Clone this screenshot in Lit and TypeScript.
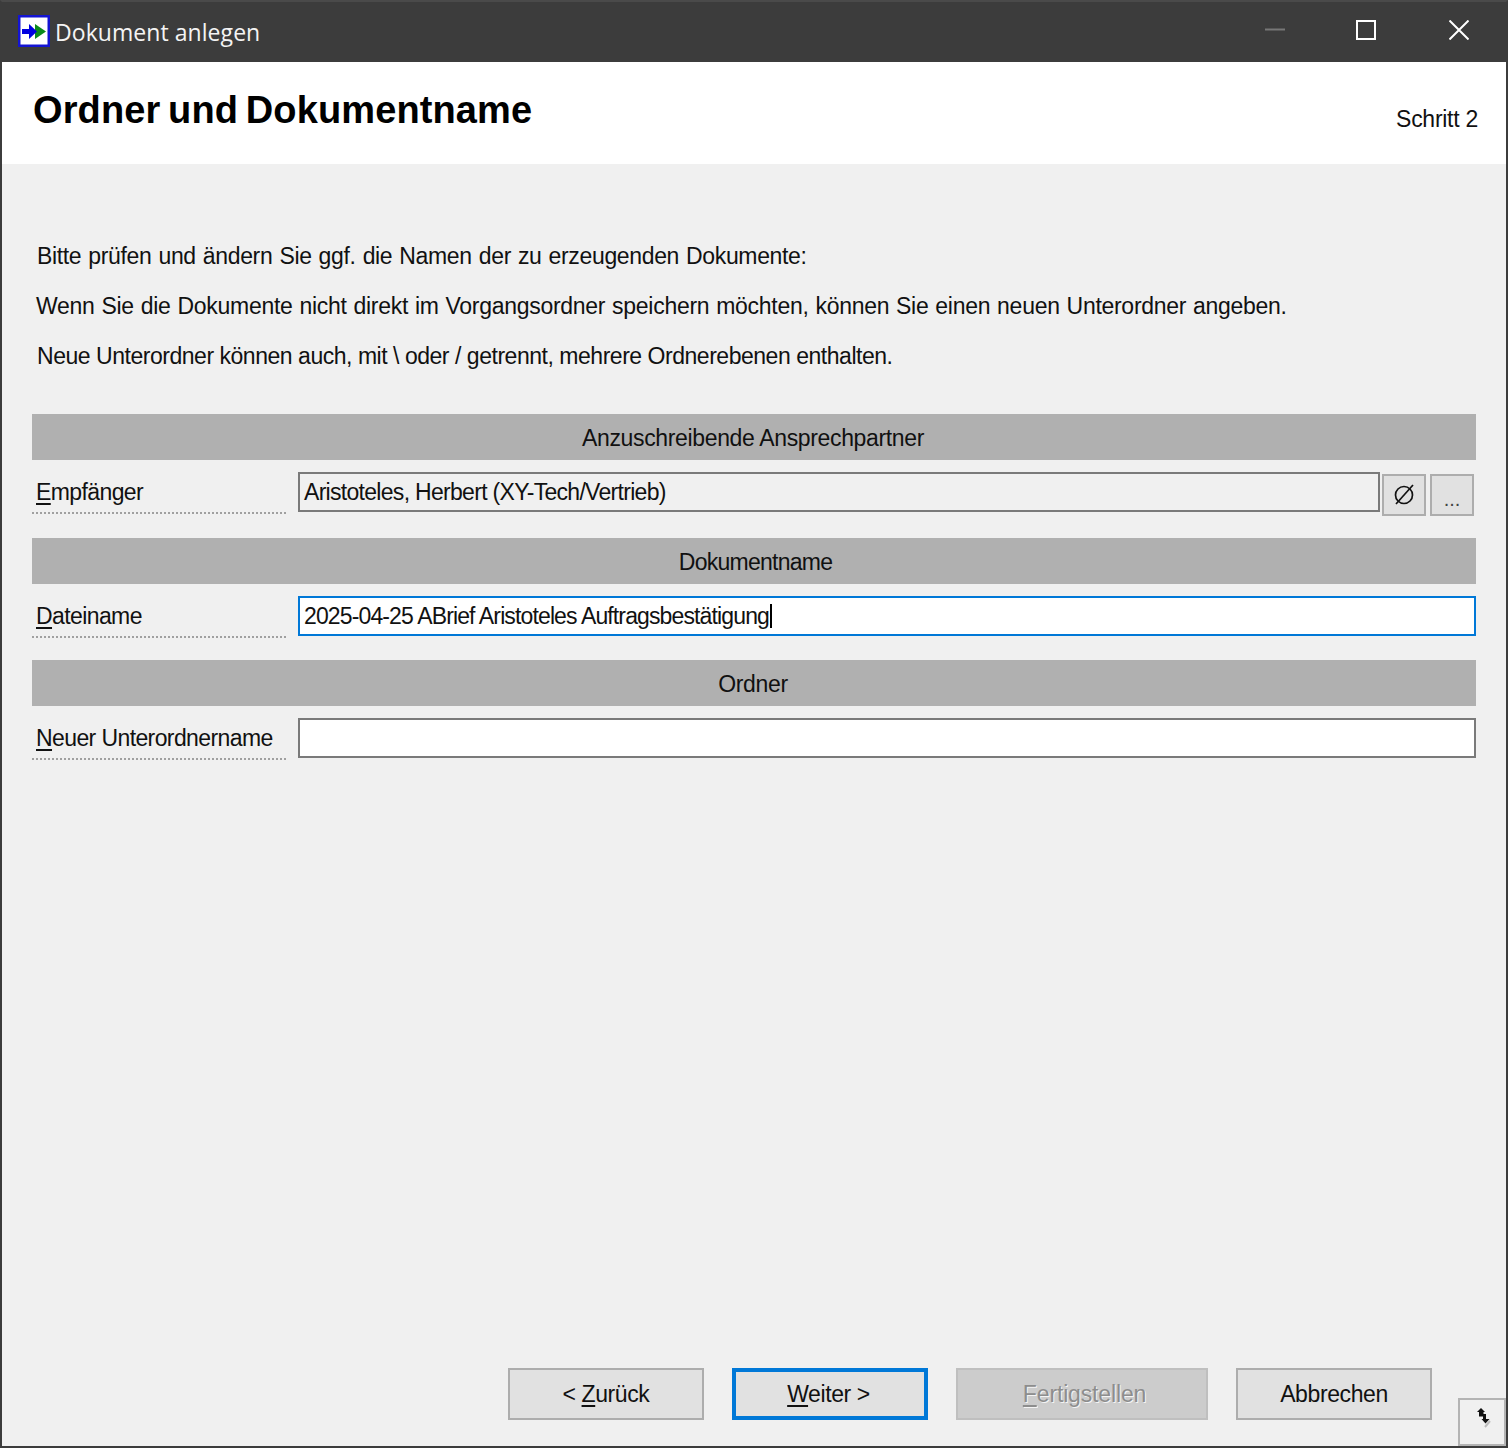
import { LitElement, html, css } from "lit";
import { customElement } from "lit/decorators.js";

@customElement("app-root")
export class AppRoot extends LitElement {
  static styles = css`
    :host { display: block; width: 1508px; height: 1448px; font-family: "Liberation Sans", Arial, sans-serif; font-size: 23px; color: #111; }
    .window { box-sizing: border-box; width: 1508px; height: 1448px; border: 2px solid #3c3c3c; border-top-color: #4a4a4a; display: flex; flex-direction: column; background: #f0f0f0; position: relative; }
    .titlebar { height: 60px; flex: none; background: #3c3c3c; color: #fff; display: flex; align-items: center; padding-left: 16px; }
    .app-icon { width: 32px; height: 32px; flex: none; margin-bottom: 2px; }
    .title-text { font-family: "Open Sans", "Noto Sans", sans-serif; font-size: 23px; margin-left: 5px; letter-spacing: 0.06px; color: #f4f4f4; }
    .caption { margin-left: auto; display: flex; margin-right: 1px; }
    .cap { width: 92px; height: 60px; box-sizing: border-box; padding-bottom: 4px; display: flex; align-items: center; justify-content: center; }
    .cap.max { padding-right: 2px; }
    .head { height: 102px; flex: none; background: #fff; display: flex; justify-content: space-between; padding: 0 28px 0 31px; box-sizing: border-box; }
    h1 { margin: 26px 0 0; font-size: 38px; line-height: 44px; font-weight: 700; color: #000; letter-spacing: 0.12px; word-spacing: -3px; }
    .step { margin-top: 43px; line-height: 28px; letter-spacing: -0.27px; }
    .body { flex: 1; display: flex; flex-direction: column; padding: 67px 30px 0; min-height: 0; }
    .intro p { margin: 0 0 0 5px; height: 50px; line-height: 50px; white-space: nowrap; }
    .intro .l1 { letter-spacing: -0.35px; word-spacing: 1px; }
    .intro .l2 { margin-left: 4px; letter-spacing: -0.285px; word-spacing: 0.8px; }
    .intro .l3 { letter-spacing: -0.47px; }
    .intro { margin-bottom: 33px; }
    .bar { height: 46px; box-sizing: border-box; padding-top: 2px; background: #b0b0b0; display: flex; align-items: center; justify-content: center; }
    .bar.b1 { letter-spacing: -0.35px; padding-right: 2px; }
    .bar.b2 { letter-spacing: -0.75px; padding-left: 3px; }
    .bar.b3 { letter-spacing: -0.33px; padding-right: 2px; }
    .row { display: flex; align-items: flex-start; margin: 12px 0 22px; }
    .label { width: 254px; height: 42px; box-sizing: border-box; flex: none; margin-right: 12px; padding-left: 4px; line-height: 40px; border-bottom: 2px dotted #a0a0a0; letter-spacing: -0.6px; white-space: nowrap; }
    u { text-underline-offset: 3px; text-decoration-thickness: 2px; }
    .input { flex: 1; min-width: 0; height: 40px; box-sizing: border-box; border: 2px solid #7a7a7a; background: #fff; padding-left: 4px; line-height: 36px; white-space: nowrap; display: flex; }
    .input.ro { background: #f0f0f0; letter-spacing: -0.7px; }
    .input.focus { border-color: #0078d7; letter-spacing: -0.87px; }
    .caret { width: 2px; height: 24px; background: #000; margin: 6px 0 0 1px; }
    .mini { width: 44px; height: 42px; box-sizing: border-box; flex: none; margin: 2px 0 0 2px; border: 2px solid #adadad; background: #e1e1e1; display: flex; align-items: center; justify-content: center; }
    .mini.more { margin: 2px 2px 0 4px; }
    .dots { font-size: 20px; color: #444; padding-top: 8px; }
    .foot { flex: none; display: flex; justify-content: flex-end; gap: 28px; padding-right: 44px; margin: auto 0 26px; }
    .btn { width: 196px; height: 52px; box-sizing: border-box; border: 2px solid #adadad; background: #e1e1e1; display: flex; align-items: center; justify-content: center; letter-spacing: -0.4px; }
    .btn.def { border: 4px solid #0078d7; padding-right: 3px; }
    .btn.off { width: 252px; padding-left: 5px; letter-spacing: -0.15px; background: #cccccc; border-color: #bfbfbf; color: #8d8d8d; text-shadow: 1px 1px 0 #f4f4f4; }
    .grip { position: absolute; right: 0; bottom: 0; width: 48px; height: 48px; box-sizing: border-box; border: 2px solid #b4b4b4; display: flex; align-items: center; justify-content: center; }
    .grip svg { margin: 0 0 8px 4px; }
  `;

  render() {
    return html`<div class="window">
      <div class="titlebar">
        <svg class="app-icon" viewBox="0 0 32 32">
          <rect x="1.250" y="1.250" width="29.500" height="29.500" fill="#fff" stroke="#1414d2" stroke-width="2.500"/>
          <path d="M17 9l11 7.500L17 24z" fill="#0a8a1a"/>
          <path d="M4 14h7V9l8 7.500L11 24v-5H4z" fill="#0000e0"/>
        </svg>
        <span class="title-text">Dokument anlegen</span>
        <div class="caption">
          <div class="cap"><svg width="20" height="20"><path d="M0 9.500h20" stroke="#777" stroke-width="2"/></svg></div>
          <div class="cap max"><svg width="20" height="20"><rect x="1" y="1" width="18" height="18" fill="none" stroke="#fff" stroke-width="2"/></svg></div>
          <div class="cap"><svg width="20" height="20"><path d="M0.500 0.500l19 19M19.500 0.500l-19 19" stroke="#fff" stroke-width="2"/></svg></div>
        </div>
      </div>
      <div class="head">
        <h1>Ordner und Dokumentname</h1>
        <div class="step">Schritt 2</div>
      </div>
      <div class="body">
        <div class="intro">
          <p class="l1">Bitte prüfen und ändern Sie ggf. die Namen der zu erzeugenden Dokumente:</p>
          <p class="l2">Wenn Sie die Dokumente nicht direkt im Vorgangsordner speichern möchten, können Sie einen neuen Unterordner angeben.</p>
          <p class="l3">Neue Unterordner können auch, mit \\ oder / getrennt, mehrere Ordnerebenen enthalten.</p>
        </div>
        <div class="bar b1">Anzuschreibende Ansprechpartner</div>
        <div class="row">
          <div class="label"><u>E</u>mpfänger</div>
          <div class="input ro">Aristoteles, Herbert (XY-Tech/Vertrieb)</div>
          <div class="mini"><svg width="22" height="22" viewBox="0 0 22 22" fill="none" stroke="#111" stroke-width="1.700"><circle cx="11" cy="11" r="8.500"/><path d="M3 20L20 1"/></svg></div>
          <div class="mini more"><span class="dots">...</span></div>
        </div>
        <div class="bar b2">Dokumentname</div>
        <div class="row">
          <div class="label"><u>D</u>ateiname</div>
          <div class="input focus">2025-04-25 ABrief Aristoteles Auftragsbestätigung<span class="caret"></span></div>
        </div>
        <div class="bar b3">Ordner</div>
        <div class="row">
          <div class="label"><u>N</u>euer Unterordnername</div>
          <div class="input"></div>
        </div>
        <div class="foot">
          <div class="btn"><span>&lt; <u>Z</u>urück</span></div>
          <div class="btn def"><span><u>W</u>eiter &gt;</span></div>
          <div class="btn off"><span><u>F</u>ertigstellen</span></div>
          <div class="btn">Abbrechen</div>
        </div>
      </div>
      <div class="grip"><svg width="14" height="20" viewBox="0 0 14 20"><path d="M8 19l5-6" stroke="#bbb" stroke-width="2"/><path d="M4 0l4 4H6.500v2H9v5h3.500L8.500 15.500 4.500 11H6V8.500H2V4H0z" fill="#111"/></svg></div>
    </div>`;
  }
}
